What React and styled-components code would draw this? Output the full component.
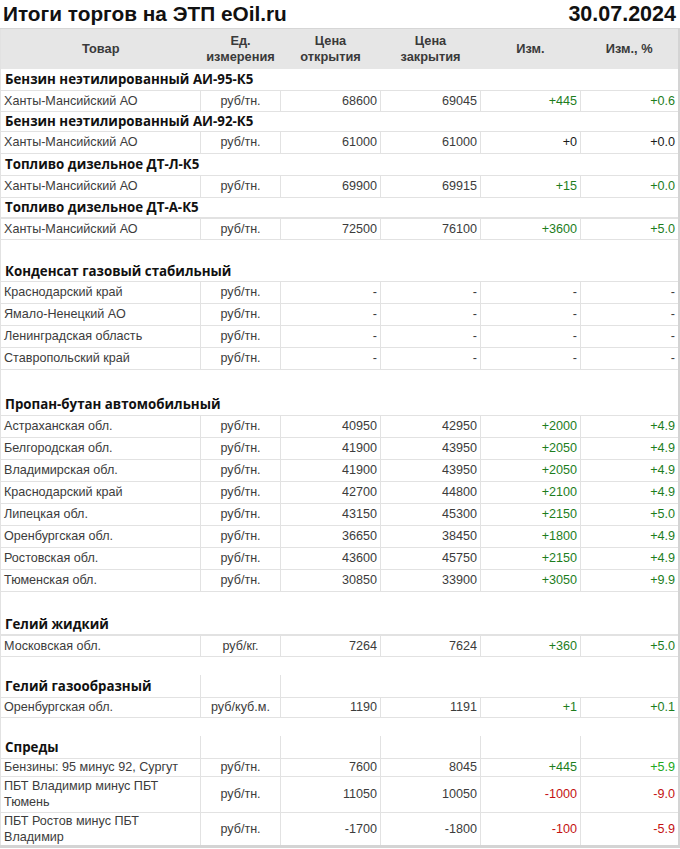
import React from "react"
import styled, { createGlobalStyle } from "styled-components"

const GlobalStyle = createGlobalStyle`
  html, body {
    margin: 0;
    padding: 0;
    background: #ffffff;
  }
  body {
    font-family: "Liberation Sans", Arial, sans-serif;
  }
`

const Page = styled.div`
  width: 680px;
`

const TitleBar = styled.div`
  display: flex;
  justify-content: space-between;
  align-items: center;
  height: 28px;
  padding: 0 4px 0 3px;
  font-family: "Liberation Sans", Arial, sans-serif;
  font-weight: bold;
  font-size: 20.8px;
  color: #111;
`

const DateText = styled.span`
  font-size: 21.5px;
`

const Sheet = styled.table`
  width: 679px;
  table-layout: fixed;
  border-collapse: collapse;
  border-right: 3px solid #d4d4d4;
  border-bottom: 3px solid #d4d4d4;
  border-left: 1px solid #e2e2e2;
`

const HeadCell = styled.th`
  height: 40px;
  padding: 0 2px;
  background: #e6e6e6;
  border-top: 1px solid #d6d6d6;
  font-family: "Liberation Sans", Arial, sans-serif;
  font-size: 12.8px;
  font-weight: bold;
  line-height: 16px;
  color: #3a3a3a;
  text-align: center;
  vertical-align: middle;
`

const Row = styled.tr`
  height: ${(p) => p.$h || 22}px;
`

const SectionCell = styled.td`
  padding: 0 4px;
  font-family: "Open Sans", "Noto Sans", sans-serif;
  font-weight: bold;
  font-size: 13.3px;
  color: #111;
  white-space: nowrap;
  overflow: visible;
  vertical-align: middle;
  border-left: ${(p) => (p.$lined ? "1px solid #e2e2e2" : "none")};
`

const Cell = styled.td`
  padding: 0 3px;
  font-family: "Liberation Sans", Arial, sans-serif;
  font-size: 12.6px;
  line-height: 16px;
  color: ${(p) => p.$color || "#3c3c3c"};
  text-align: ${(p) => p.$align || "right"};
  vertical-align: middle;
  border-top: ${(p) => (p.$thick ? "2px" : "1px")} solid #e2e2e2;
  border-bottom: 1px solid #e2e2e2;
  border-left: 1px solid #e2e2e2;
  &:first-child {
    border-left: none;
  }
`

const GREEN = "#1d7d1d"
const BRIGHT = "#21a821"
const RED = "#c41212"

// colour of both change cells follows the sign of the absolute change
const changeColor = (diff, bright) => {
  if (diff === "-") return undefined
  if (diff.startsWith("-")) return RED
  if (diff === "+0") return "#1a1a1a"
  return bright ? BRIGHT : GREEN
}

const groups = [
  {
    title: "Бензин неэтилированный АИ-95-К5",
    h: 21,
    rows: [["Ханты-Мансийский АО", "руб/тн.", "68600", "69045", "+445", "+0.6", 21]],
  },
  {
    title: "Бензин неэтилированный АИ-92-К5",
    h: 20,
    rows: [["Ханты-Мансийский АО", "руб/тн.", "61000", "61000", "+0", "+0.0", 22]],
  },
  {
    title: "Топливо дизельное ДТ-Л-К5",
    h: 22,
    rows: [["Ханты-Мансийский АО", "руб/тн.", "69900", "69915", "+15", "+0.0", 22]],
  },
  {
    title: "Топливо дизельное ДТ-А-К5",
    h: 21,
    thick: true,
    rows: [["Ханты-Мансийский АО", "руб/тн.", "72500", "76100", "+3600", "+5.0", 21]],
  },
  {
    title: "Конденсат газовый стабильный",
    gap: 22,
    h: 20,
    rows: [
      ["Краснодарский край", "руб/тн.", "-", "-", "-", "-"],
      ["Ямало-Ненецкий АО", "руб/тн.", "-", "-", "-", "-"],
      ["Ленинградская область", "руб/тн.", "-", "-", "-", "-"],
      ["Ставропольский край", "руб/тн.", "-", "-", "-", "-"],
    ],
  },
  {
    title: "Пропан-бутан автомобильный",
    gap: 24,
    h: 22,
    rows: [
      ["Астраханская обл.", "руб/тн.", "40950", "42950", "+2000", "+4.9"],
      ["Белгородская обл.", "руб/тн.", "41900", "43950", "+2050", "+4.9"],
      ["Владимирская обл.", "руб/тн.", "41900", "43950", "+2050", "+4.9"],
      ["Краснодарский край", "руб/тн.", "42700", "44800", "+2100", "+4.9"],
      ["Липецкая обл.", "руб/тн.", "43150", "45300", "+2150", "+5.0"],
      ["Оренбургская обл.", "руб/тн.", "36650", "38450", "+1800", "+4.9"],
      ["Ростовская обл.", "руб/тн.", "43600", "45750", "+2150", "+4.9"],
      ["Тюменская обл.", "руб/тн.", "30850", "33900", "+3050", "+9.9"],
    ],
  },
  {
    title: "Гелий жидкий",
    gap: 22,
    h: 22,
    thick: true,
    rows: [["Московская обл.", "руб/кг.", "7264", "7624", "+360", "+5.0", 21]],
  },
  {
    title: "Гелий газообразный",
    gap: 19,
    h: 22,
    split: 2,
    rows: [["Оренбургская обл.", "руб/куб.м.", "1190", "1191", "+1", "+0.1", 20]],
  },
  {
    title: "Спреды",
    gap: 19,
    h: 22,
    split: 5,
    rows: [
      ["Бензины: 95 минус 92, Сургут", "руб/тн.", "7600", "8045", "+445", "+5.9", 18, true],
      ["ПБТ Владимир минус ПБТ Тюмень", "руб/тн.", "11050", "10050", "-1000", "-9.0", 36],
      ["ПБТ Ростов минус ПБТ Владимир", "руб/тн.", "-1700", "-1800", "-100", "-5.9", 31],
    ],
  },
]

const DataRow = ({ row, thick }) => {
  const [name, unit, open, close, diff, pct, h, bright] = row
  return (
    <Row $h={h}>
      <Cell $align="left" $thick={thick}>{name}</Cell>
      <Cell $align="center" $thick={thick}>{unit}</Cell>
      <Cell $thick={thick}>{open}</Cell>
      <Cell $thick={thick}>{close}</Cell>
      <Cell $thick={thick} $color={changeColor(diff)}>{diff}</Cell>
      <Cell $thick={thick} $color={changeColor(diff, bright)}>{pct}</Cell>
    </Row>
  )
}

const SectionRow = ({ title, h, split }) => {
  if (!split) {
    return (
      <Row $h={h}>
        <SectionCell colSpan={6}>{title}</SectionCell>
      </Row>
    )
  }
  return (
    <Row $h={h}>
      <SectionCell>{title}</SectionCell>
      {[1, 2, 3, 4, 5].map((i) => (
        <SectionCell key={i} $lined={i <= split} />
      ))}
    </Row>
  )
}

export default function App() {
  return (
    <Page>
      <GlobalStyle />
      <TitleBar>
        <span>Итоги торгов на ЭТП eOil.ru</span>
        <DateText>30.07.2024</DateText>
      </TitleBar>
      <Sheet>
        <colgroup>
          <col style={{ width: 200 }} />
          <col style={{ width: 80 }} />
          <col style={{ width: 100 }} />
          <col style={{ width: 100 }} />
          <col style={{ width: 100 }} />
          <col style={{ width: 99 }} />
        </colgroup>
        <thead>
          <tr>
            <HeadCell>Товар</HeadCell>
            <HeadCell>
              Ед.
              <br />
              измерения
            </HeadCell>
            <HeadCell>
              Цена
              <br />
              открытия
            </HeadCell>
            <HeadCell>
              Цена
              <br />
              закрытия
            </HeadCell>
            <HeadCell>Изм.</HeadCell>
            <HeadCell>Изм., %</HeadCell>
          </tr>
        </thead>
        <tbody>
          {groups.map((g) => (
            <React.Fragment key={g.title}>
              {g.gap ? (
                <Row $h={g.gap}>
                  <td colSpan={6} />
                </Row>
              ) : null}
              <SectionRow title={g.title} h={g.h} split={g.split} />
              {g.rows.map((r, i) => (
                <DataRow key={r[0]} row={r} thick={g.thick && i === 0} />
              ))}
            </React.Fragment>
          ))}
        </tbody>
      </Sheet>
    </Page>
  )
}
